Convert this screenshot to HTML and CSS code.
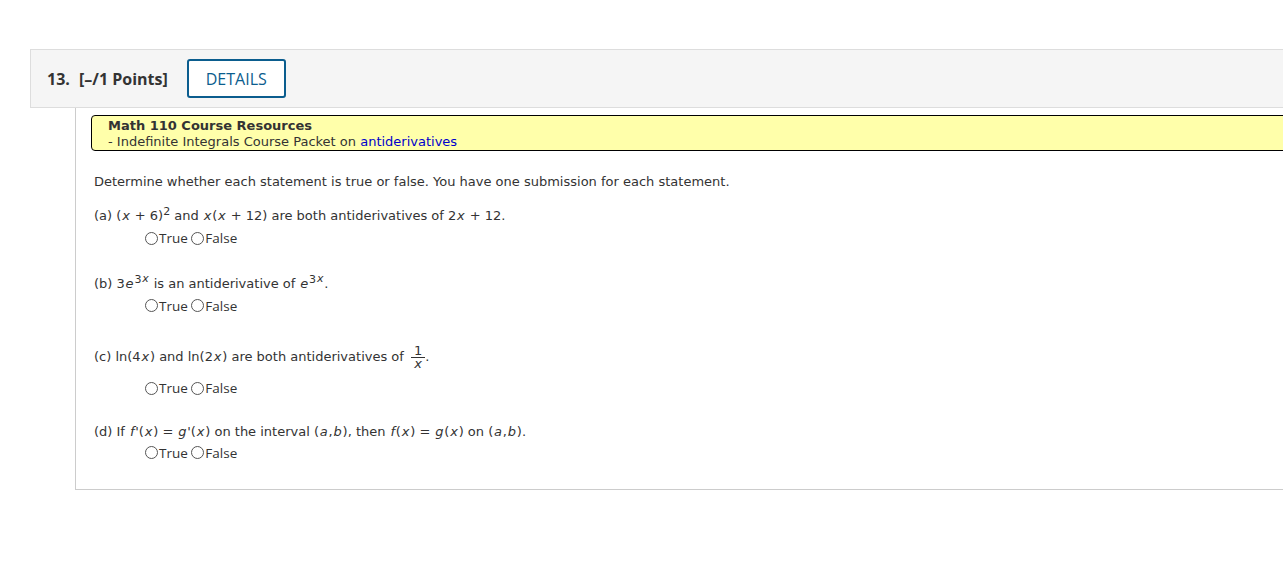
FILE: index.html
```html
<!DOCTYPE html>
<html lang="en">
<head>
    <meta charset="UTF-8">
    <title>Question 13</title>
    <link rel="stylesheet" href="styles.css">
</head>
<body>

<div class="question">
    <div class="q-header">
        <span class="q-number">13.</span>
        <span class="q-points">[&ndash;/1 Points]</span>
        <button class="details">DETAILS</button>
    </div>

    <div class="q-body">
        <div class="resources">
            <div class="res-title">Math 110 Course Resources</div>
            <div>- Indefinite Integrals Course Packet on <a href="#">antiderivatives</a></div>
        </div>

        <p class="intro">Determine whether each statement is true or false. You have one submission for each statement.</p>

        <div class="part part-a">
            <div class="stmt">(a) (<i>x</i> + 6)<sup>2</sup> and <i>x</i>(<i>x</i> + 12) are both antiderivatives of 2<i>x</i> + 12.</div>
            <div class="choices"><label><span class="radio"></span>True</label> <label><span class="radio"></span>False</label></div>
        </div>

        <div class="part part-b">
            <div class="stmt">(b) 3<i>e</i><sup>3<i>x</i></sup> is an antiderivative of <i>e</i><sup>3<i>x</i></sup>.</div>
            <div class="choices"><label><span class="radio"></span>True</label> <label><span class="radio"></span>False</label></div>
        </div>

        <div class="part part-c">
            <div class="stmt">(c) ln(4<i>x</i>) and ln(2<i>x</i>) are both antiderivatives of <span class="frac"><span class="num">1</span><span class="den"><i>x</i></span></span>.</div>
            <div class="choices"><label><span class="radio"></span>True</label> <label><span class="radio"></span>False</label></div>
        </div>

        <div class="part part-d">
            <div class="stmt">(d) If <i>f</i>'(<i>x</i>) = <i>g</i>'(<i>x</i>) on the interval (<i>a</i>,<i>b</i>), then <i>f</i>(<i>x</i>) = <i>g</i>(<i>x</i>) on (<i>a</i>,<i>b</i>).</div>
            <div class="choices"><label><span class="radio"></span>True</label> <label><span class="radio"></span>False</label></div>
        </div>
    </div>
</div>

</body>
</html>
```

FILE: styles.css
```css
body {
    margin: 0;
    background: #fff;
    overflow: hidden;
    font-family: "DejaVu Sans", Verdana, sans-serif;
    color: #333;
}

.question {
    margin: 49px 0 0 30px;
    width: 1300px;
}

.q-header {
    display: flex;
    align-items: center;
    height: 57px;
    padding-left: 16px;
    background: #f5f5f5;
    border: 1px solid #ddd;
    font-family: "Open Sans", sans-serif;
}

.q-number {
    font-weight: bold;
    font-size: 16px;
    color: #333;
    width: 32px;
}

.q-points {
    font-weight: bold;
    font-size: 16px;
    color: #333;
}

.details {
    margin-left: 19px;
    width: 99px;
    height: 39px;
    background: #fff;
    border: 2px solid #0b5d8e;
    border-radius: 3px;
    color: #0b5d8e;
    font-family: "Open Sans", sans-serif;
    font-size: 16px;
    padding: 0;
}

.q-body {
    margin-left: 45px;
    height: 374px;
    border-left: 1px solid #ccc;
    border-bottom: 1px solid #ccc;
    padding: 7px 0 0 15px;
    font-size: 13px;
}

.resources {
    height: 36px;
    box-sizing: border-box;
    padding: 2px 0 0 16px;
    background: #ffffaa;
    border: 1px solid #000;
    border-radius: 4px 0 0 4px;
    line-height: 16px;
    color: #333;
}

.res-title {
    font-weight: bold;
}

.resources a {
    color: #0000cc;
    text-decoration: none;
}

.intro {
    margin: 23px 0 0 3px;
}

.part {
    margin-left: 3px;
}

.stmt {
    line-height: 18px;
}

.stmt i {
    padding: 0 0.8px;
}

sup {
    font-size: 11px;
    line-height: 0;
}

.part-a {
    margin-top: 18px;
}

.part-b {
    margin-top: 26px;
}

.part-c {
    margin-top: 29px;
}

.part-d {
    margin-top: 24px;
}

.choices {
    margin: 4px 0 0 51px;
    font-family: "Open Sans", sans-serif;
    font-size: 13.5px;
    color: #333;
}

.part-c .choices {
    margin-top: 9px;
}

.part-d .choices {
    margin-top: 3px;
}

.choices label {
    display: inline-flex;
    align-items: center;
}

.radio {
    display: inline-block;
    width: 11px;
    height: 11px;
    border: 1px solid #555;
    border-radius: 50%;
    margin-right: 1px;
}

.frac {
    display: inline-flex;
    flex-direction: column;
    align-items: center;
    vertical-align: middle;
    font-size: 13px;
    line-height: 12px;
    margin-left: 3px;
}

.num {
    border-bottom: 1px solid #333;
    padding: 0 3px;
}
```
